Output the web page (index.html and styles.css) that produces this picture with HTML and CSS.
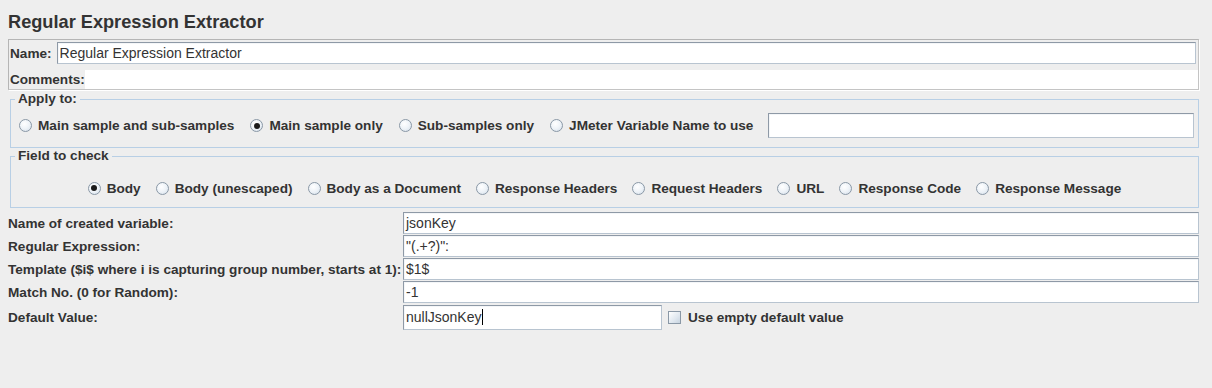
FILE: index.html
```html
<!DOCTYPE html>
<html>
<head>
<meta charset="utf-8">
<link rel="stylesheet" href="styles.css">
</head>
<body>
<div class="page">
  <div class="title">Regular Expression Extractor</div>
  <div class="namepanel">
    <div class="namerow">
      <span class="lbl">Name:</span>
      <div class="field grow">Regular Expression Extractor</div>
    </div>
    <div class="commentrow">
      <span class="lbl">Comments:</span>
      <div class="commentarea"></div>
    </div>
  </div>

  <div class="group apply">
    <div class="legend">Apply to:</div>
    <div class="applyrow">
      <span class="opt"><span class="radio"></span>Main sample and sub-samples</span>
      <span class="opt"><span class="radio on"></span>Main sample only</span>
      <span class="opt"><span class="radio"></span>Sub-samples only</span>
      <span class="opt"><span class="radio"></span>JMeter Variable Name to use</span>
      <div class="field grow varfield"></div>
    </div>
  </div>

  <div class="group check">
    <div class="legend">Field to check</div>
    <div class="checkrow">
      <span class="opt"><span class="radio on"></span>Body</span>
      <span class="opt"><span class="radio"></span>Body (unescaped)</span>
      <span class="opt"><span class="radio"></span>Body as a Document</span>
      <span class="opt"><span class="radio"></span>Response Headers</span>
      <span class="opt"><span class="radio"></span>Request Headers</span>
      <span class="opt"><span class="radio"></span>URL</span>
      <span class="opt"><span class="radio"></span>Response Code</span>
      <span class="opt"><span class="radio"></span>Response Message</span>
    </div>
  </div>

  <div class="form">
    <span class="lbl">Name of created variable:</span>
    <div class="field">jsonKey</div>
    <span class="lbl">Regular Expression:</span>
    <div class="field">"(.+?)":</div>
    <span class="lbl">Template ($i$ where i is capturing group number, starts at 1):</span>
    <div class="field">$1$</div>
    <span class="lbl">Match No. (0 for Random):</span>
    <div class="field">-1</div>
    <span class="lbl">Default Value:</span>
    <div class="defrow">
      <div class="field deffield">nullJsonKey<span class="caret"></span></div>
      <span class="opt cb"><span class="checkbox"></span>Use empty default value</span>
    </div>
  </div>
</div>
</body>
</html>
```

FILE: styles.css
```css
html, body {
  margin: 0;
  padding: 0;
  background: #eeeeee;
}
body {
  font-family: "Liberation Sans", Arial, sans-serif;
  font-size: 13.6px;
  color: #333333;
}
.page {
  width: 1191px;
  padding: 0 0 0 8px;
}
.title {
  font-size: 18.2px;
  font-weight: bold;
  height: 22px;
  line-height: 22px;
  padding-top: 11px;
  margin-bottom: 6px;
}
.lbl {
  font-weight: bold;
  white-space: nowrap;
}
.field {
  box-sizing: border-box;
  height: 22px;
  line-height: 20px;
  background: #ffffff;
  border: 1px solid #8e99a6;
  border-right-color: #b8c4d0;
  border-bottom-color: #b8c4d0;
  box-shadow: inset 1px 1px 0 #f4f6f8;
  padding: 0 2px;
  white-space: nowrap;
  overflow: hidden;
  font-size: 14px;
}
.grow {
  flex: 1;
}
.namepanel {
  box-sizing: border-box;
  height: 51px;
  border: 1px solid #b5b5b5;
  border-right-color: #c4c4c4;
  border-bottom-color: #c4c4c4;
  box-shadow: 1px 1px 0 #ffffff;
  display: flex;
  flex-direction: column;
}
.namerow {
  display: flex;
  align-items: center;
  gap: 5px;
  padding: 2px 2px 0 1px;
}
.namerow .field {
  height: 22px;
}
.commentrow {
  display: flex;
  align-items: flex-end;
  flex: 1;
  padding-left: 1px;
  padding-top: 6px;
}
.commentrow .lbl {
  line-height: 16px;
  padding-bottom: 1px;
}
.commentarea {
  flex: 1;
  background: #ffffff;
  align-self: stretch;
}
.group {
  position: relative;
  margin-left: 2px;
  border: 1px solid #b8cfe5;
  box-sizing: border-box;
}
.legend {
  position: absolute;
  left: 4px;
  top: -9px;
  background: #eeeeee;
  padding: 0 3px;
  font-weight: bold;
  line-height: 16px;
}
.apply {
  margin-top: 9px;
  height: 49px;
}
.applyrow {
  display: flex;
  align-items: center;
  height: 100%;
  padding: 4px 4px 0 8px;
  box-sizing: border-box;
  gap: 16px;
}
.applyrow .varfield {
  height: 25px;
  margin-left: -1px;
}
.opt {
  display: inline-flex;
  align-items: center;
  gap: 6px;
  font-weight: bold;
  white-space: nowrap;
}
.radio {
  box-sizing: border-box;
  width: 13px;
  height: 13px;
  border-radius: 50%;
  border: 1px solid #8a98a6;
  background: radial-gradient(circle at 40% 35%, #ffffff 0%, #eef3f8 50%, #d2dde8 100%);
  position: relative;
  flex: none;
}
.radio.on::after {
  content: "";
  position: absolute;
  left: 2.5px;
  top: 2.5px;
  width: 6px;
  height: 6px;
  border-radius: 50%;
  background: #1a1a1a;
}
.check {
  margin-top: 8px;
  height: 52px;
}
.checkrow {
  display: flex;
  justify-content: center;
  align-items: center;
  height: 100%;
  padding-top: 12px;
  box-sizing: border-box;
  gap: 15px;
}
.form {
  margin-top: 4px;
  display: grid;
  grid-template-columns: 395px 1fr;
  row-gap: 1px;
  align-items: center;
}
.form .field {
  height: 22px;
}
.defrow {
  display: flex;
  align-items: center;
  gap: 6px;
  margin-top: 1px;
}
.deffield {
  width: 259px;
  height: 25px !important;
  line-height: 23px;
  flex: none;
}
.caret {
  display: inline-block;
  width: 1px;
  height: 16px;
  background: #000;
  vertical-align: -3px;
}
.checkbox {
  box-sizing: border-box;
  width: 13px;
  height: 13px;
  border: 1px solid #8a98a6;
  background: linear-gradient(135deg, #ffffff 0%, #dfe7ef 60%, #c8d4e0 100%);
  flex: none;
}
.cb {
  gap: 7px;
}
```
